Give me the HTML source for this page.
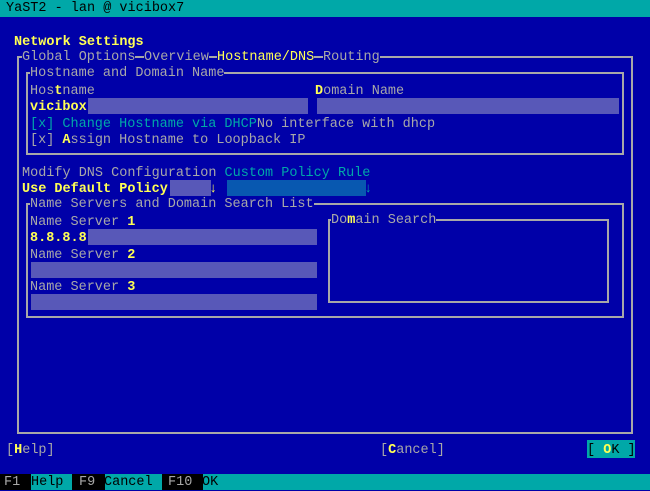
<!DOCTYPE html>
<html><head><meta charset="utf-8"><style>
*{margin:0;padding:0;box-sizing:border-box}
body{width:650px;height:490px;background:#0000a8;position:relative;overflow:hidden;font-family:"Liberation Mono","DejaVu Sans Mono",monospace;font-size:13.5px;color:#a8a8a8}
.t{position:absolute;white-space:pre;line-height:16px;height:16px;margin-top:2px}
.y{color:#ffff54;font-weight:bold}
.c{color:#00a8a8}
.k{color:#000}
.b{background:#0000a8}
.box{position:absolute;border:2px solid #a8a8a8}
.f{position:absolute;background:#5858b8}
</style></head><body>
<div style="position:absolute;left:0;top:0;width:650px;height:17px;background:#00a8a8"></div>
<div class="t k" style="left:6px;top:-1px">YaST2 - lan @ vicibox7</div>

<div class="box" style="left:17px;top:56px;width:616px;height:378px"></div>
<div class="box" style="left:26px;top:72px;width:598px;height:83px"></div>
<div class="box" style="left:26px;top:203px;width:598px;height:115px"></div>
<div class="box" style="left:328px;top:219px;width:281px;height:84px"></div>

<div class="f" style="left:88px;top:98px;width:220px;height:16px"></div>
<div class="f" style="left:317px;top:98px;width:302px;height:16px"></div>
<div class="f" style="left:170px;top:180px;width:41px;height:16px"></div>
<div style="position:absolute;left:227px;top:180px;width:139px;height:16px;background:#0858b0"></div>
<div class="f" style="left:88px;top:229px;width:229px;height:16px"></div>
<div class="f" style="left:31px;top:262px;width:286px;height:16px"></div>
<div class="f" style="left:31px;top:294px;width:286px;height:16px"></div>

<div class="t y" style="left:14px;top:33px">Network Settings</div>
<div class="t b" style="left:22px;top:48px">Global Options</div>
<div class="t b" style="left:144px;top:48px">Overview</div>
<div class="t b y" style="left:217px;top:48px;font-weight:normal">Hostname/DNS</div>
<div class="t b" style="left:323px;top:48px">Routing</div>

<div class="t b" style="left:30px;top:64px">Hostname and Domain Name</div>
<div class="t" style="left:30px;top:82px">Hos<span class="y">t</span>name</div>
<div class="t" style="left:315px;top:82px"><span class="y">D</span>omain Name</div>
<div class="t y" style="left:30px;top:98px">vicibox</div>
<div class="t" style="left:30px;top:115px"><span class="c">[x] Change Hostname via DHCP</span>No interface with dhcp</div>
<div class="t" style="left:30px;top:131px">[x] <span class="y">A</span>ssign Hostname to Loopback IP</div>

<div class="t" style="left:22px;top:164px">Modify DNS Configuration <span class="c">Custom Policy Rule</span></div>
<div class="t y" style="left:22px;top:180px">Use Default Policy</div>
<div class="t y" style="left:209px;top:180px">↓</div>
<div class="t c" style="left:364px;top:180px">↓</div>

<div class="t b" style="left:30px;top:195px">Name Servers and Domain Search List</div>
<div class="t" style="left:30px;top:213px">Name Server <span class="y">1</span></div>
<div class="t b" style="left:331px;top:211px">Do<span class="y">m</span>ain Search</div>
<div class="t y" style="left:30px;top:229px">8.8.8.8</div>
<div class="t" style="left:30px;top:246px">Name Server <span class="y">2</span></div>
<div class="t" style="left:30px;top:278px">Name Server <span class="y">3</span></div>

<div class="t" style="left:6px;top:441px">[<span class="y">H</span>elp]</div>
<div class="t" style="left:380px;top:441px">[<span class="y">C</span>ancel]</div>
<div style="position:absolute;left:587px;top:440px;height:18px;width:48px;background:#00a8a8"></div>
<div class="t k" style="left:587px;top:441px">[ <span class="y">O</span>K ]</div>

<div style="position:absolute;left:0;top:474px;width:650px;height:16px;background:#00a8a8"></div>
<div style="position:absolute;left:0;top:474px;width:31px;height:16px;background:#000"></div>
<div style="position:absolute;left:72px;top:474px;width:33px;height:16px;background:#000"></div>
<div style="position:absolute;left:162px;top:474px;width:41px;height:16px;background:#000"></div>
<div class="t" style="left:4px;top:473px">F1</div>
<div class="t k" style="left:31px;top:473px">Help</div>
<div class="t" style="left:79px;top:473px">F9</div>
<div class="t k" style="left:104px;top:473px">Cancel</div>
<div class="t" style="left:168px;top:473px">F10</div>
<div class="t k" style="left:202px;top:473px">OK</div>
</body></html>
